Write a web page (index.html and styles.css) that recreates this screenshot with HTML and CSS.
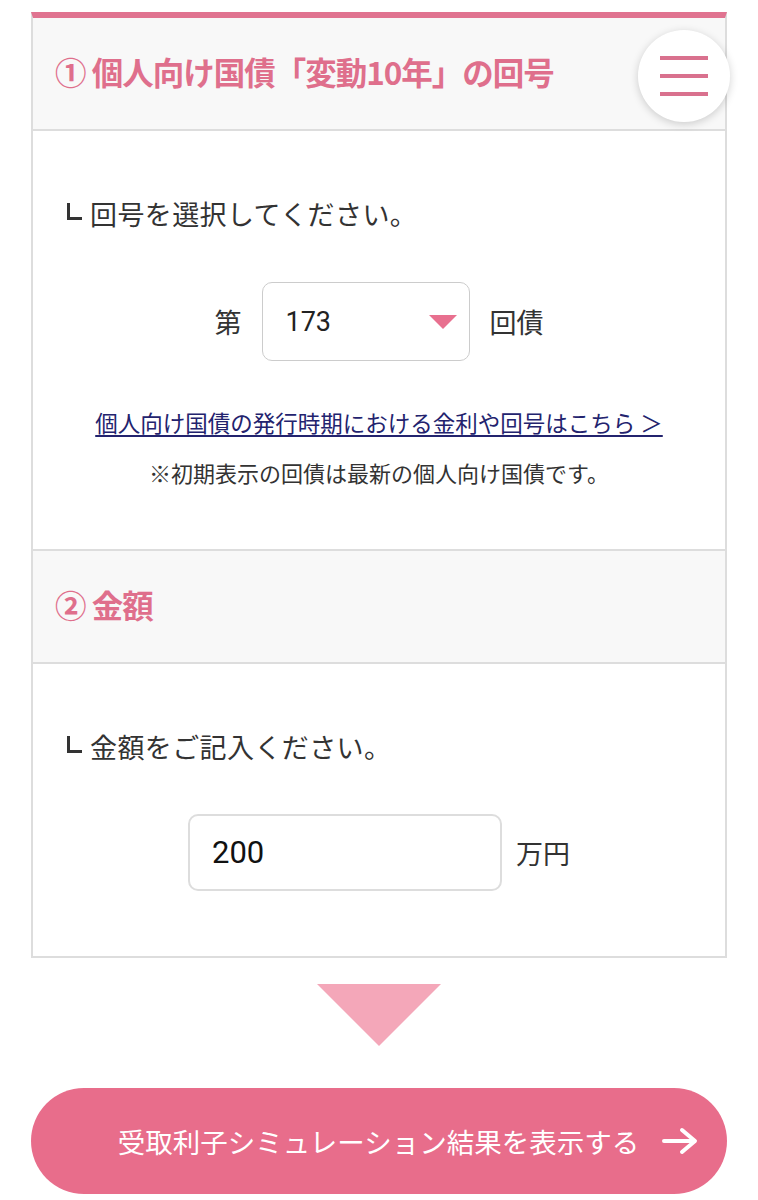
FILE: index.html
```html
<!DOCTYPE html>
<html lang="ja">
<head>
    <meta charset="UTF-8">
    <meta name="viewport" content="width=device-width, initial-scale=1.0">
    <title>受取利子シミュレーション</title>
    <link rel="stylesheet" href="styles.css">
</head>
<body>
    <main class="page">
        <div class="card">
            <h2 class="sec-head">① 個人向け国債「変動10年」の回号</h2>
            <div class="sec-body">
                <p class="lead">回号を選択してください。</p>
                <div class="field-row">
                    <span class="unit">第</span>
                    <div class="select-box">
                        <span class="select-value">173</span>
                        <span class="select-arrow"></span>
                    </div>
                    <span class="unit">回債</span>
                </div>
                <p class="link-line"><a href="#" class="rate-link">個人向け国債の発行時期における金利や回号はこちら ＞</a></p>
                <p class="note">※初期表示の回債は最新の個人向け国債です。</p>
            </div>

            <h2 class="sec-head">② 金額</h2>
            <div class="sec-body">
                <p class="lead">金額をご記入ください。</p>
                <div class="field-row amount-row">
                    <div class="text-box">200</div>
                    <span class="unit">万円</span>
                </div>
            </div>
        </div>

        <div class="down-arrow"></div>

        <button class="submit-btn">
            <span>受取利子シミュレーション結果を表示する</span>
            <svg class="btn-arrow" width="38" height="30" viewBox="0 0 38 30">
                <path d="M3 15 H33 M21 4 L34 15 L21 26" fill="none" stroke="#fff" stroke-width="4" stroke-linecap="round" stroke-linejoin="round"/>
            </svg>
        </button>
    </main>

    <button class="menu-btn" aria-label="メニュー">
        <span></span><span></span><span></span>
    </button>
</body>
</html>
```

FILE: styles.css
```css
/* 基本 */
body {
    margin: 0;
    padding: 0;
    background-color: #fff;
    color: #333;
    font-family: Roboto, "Noto Sans CJK JP", sans-serif;
}

p {
    margin: 0;
}

.page {
    padding: 12px 31px 0;
}

/* カード */
.card {
    border-top: 6px solid #e07390;
    border-left: 2px solid #ddd;
    border-right: 2px solid #ddd;
    border-bottom: 2px solid #ddd;
}

.sec-head {
    margin: 0;
    height: 113px;
    display: flex;
    align-items: center;
    padding: 0 0 6px 22px;
    box-sizing: border-box;
    background-color: #f8f8f8;
    border-bottom: 2px solid #ddd;
    color: #df6f8c;
    font-family: "Noto Sans CJK JP", sans-serif;
    font-size: 31.5px;
    font-weight: 700;
    letter-spacing: -1px;
}

.sec-body {
    padding: 65px 0 61px;
    border-bottom: 2px solid #ddd;
}

.sec-body:last-child {
    border-bottom: none;
    padding-bottom: 65px;
}

.lead {
    position: relative;
    padding-left: 57px;
    font-family: "Noto Sans CJK JP", sans-serif;
    font-size: 27px;
    line-height: 36px;
    letter-spacing: 0.4px;
    color: #333;
}

.lead::before {
    content: "";
    position: absolute;
    left: 34px;
    top: 7px;
    width: 12px;
    height: 14px;
    border-left: 3px solid #333;
    border-bottom: 3px solid #333;
}

/* 入力欄 */
.field-row {
    display: flex;
    justify-content: center;
    align-items: center;
    gap: 20px;
    margin-top: 50px;
}

.unit {
    font-family: "Noto Sans CJK JP", sans-serif;
    font-size: 27px;
    color: #333;
}

.select-box {
    width: 208px;
    height: 79px;
    border: 1px solid #ccc;
    border-radius: 10px;
    display: flex;
    align-items: center;
    justify-content: space-between;
    padding: 0 12px 0 23px;
    box-sizing: border-box;
    background-color: #fff;
}

.select-value {
    font-size: 27px;
    color: #222;
}

.select-arrow {
    width: 0;
    height: 0;
    border-left: 14px solid transparent;
    border-right: 14px solid transparent;
    border-top: 14px solid #e8708f;
}

.amount-row {
    margin-top: 49px;
    gap: 14px;
}

.text-box {
    width: 314px;
    height: 77px;
    box-sizing: border-box;
    border: 2px solid #ddd;
    border-radius: 10px;
    padding-left: 22px;
    display: flex;
    align-items: center;
    font-size: 31px;
    color: #111;
}

.link-line {
    margin-top: 45px;
    text-align: center;
    line-height: 32px;
}

.rate-link {
    font-family: "Noto Sans CJK JP", sans-serif;
    font-size: 22.5px;
    color: #23236e;
    text-decoration: underline;
    text-underline-offset: 3px;
}

.note {
    margin-top: 13px;
    text-align: center;
    font-family: "Noto Sans CJK JP", sans-serif;
    font-size: 22px;
    line-height: 32px;
    color: #333;
}

/* 矢印とボタン */
.down-arrow {
    width: 0;
    height: 0;
    margin: 26px auto 0;
    border-left: 62px solid transparent;
    border-right: 62px solid transparent;
    border-top: 62px solid #f4a7b9;
}

.submit-btn {
    display: flex;
    align-items: center;
    justify-content: center;
    gap: 22px;
    width: 100%;
    height: 106px;
    margin-top: 42px;
    padding: 0 0 0 59px;
    border: none;
    border-radius: 53px;
    background-color: #e86d8b;
    color: #fff;
    font-family: "Noto Sans CJK JP", sans-serif;
    font-size: 27.5px;
    cursor: pointer;
}

.btn-arrow {
    flex-shrink: 0;
}

/* メニュー */
.menu-btn {
    position: fixed;
    top: 30px;
    right: 28px;
    width: 92px;
    height: 92px;
    border: none;
    border-radius: 50%;
    background-color: #fff;
    box-shadow: 0 2px 8px rgba(0, 0, 0, 0.18);
    display: flex;
    flex-direction: column;
    justify-content: center;
    align-items: center;
    gap: 14px;
    padding: 0;
}

.menu-btn span {
    display: block;
    width: 48px;
    height: 4px;
    background-color: #d9718e;
}
```
